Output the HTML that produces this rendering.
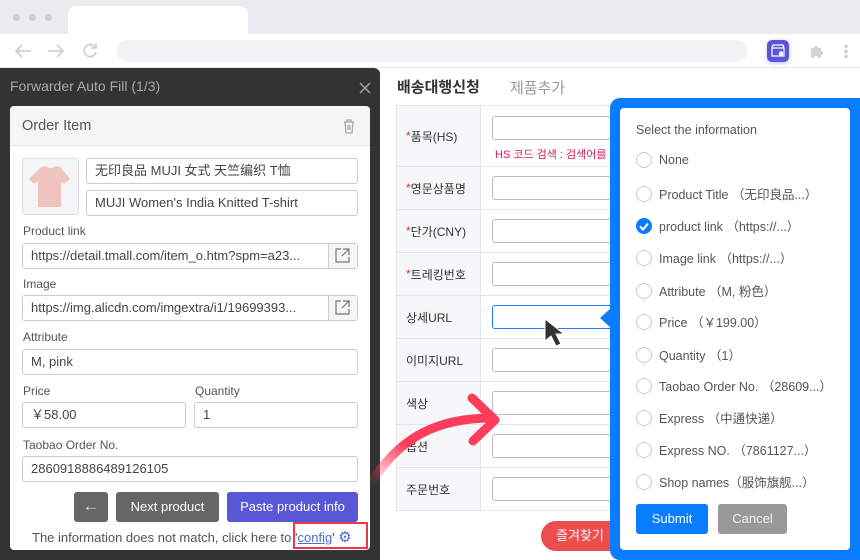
<!DOCTYPE html>
<html><head><meta charset="utf-8"><style>
*{box-sizing:border-box;margin:0;padding:0}
html,body{width:860px;height:560px;overflow:hidden}
body{position:relative;background:#fff;font-family:"Liberation Sans","Noto Sans CJK KR","Noto Sans CJK SC",sans-serif;color:#333}
.abs{position:absolute}
.inp{position:absolute;border:1px solid #ccc;border-radius:3px;background:#fff;font-size:13px;color:#444;padding-left:8px;line-height:23px;white-space:nowrap;overflow:hidden}
.lbl{position:absolute;font-size:12px;color:#555}
.row{position:absolute;left:396px;width:230px;border-bottom:1px solid #e3e6e8}
.row .k{position:absolute;left:0;top:0;bottom:0;width:85px;background:#f5f7f8;border-right:1px solid #e3e6e8;font-size:12px;color:#333;padding-left:10px;display:flex;align-items:center}
.row .k b{color:#e8275a;font-weight:normal}
.row .v{position:absolute;left:96px;width:130px;height:24px;border:1px solid #bbb;border-radius:3px}
.opt{position:absolute;left:636px;font-size:12.5px;color:#555;display:flex;align-items:center;white-space:nowrap}
.opt i{display:inline-block;width:16px;height:16px;border:1px solid #ccc;border-radius:50%;margin-right:7px;background:#fff}
</style></head><body>
<div class="abs" style="left:0;top:0;width:860px;height:34px;background:#e9ebef"></div>
<div class="abs" style="left:13px;top:14px;width:7px;height:7px;border-radius:50%;background:#ccc"></div>
<div class="abs" style="left:29px;top:14px;width:7px;height:7px;border-radius:50%;background:#ccc"></div>
<div class="abs" style="left:45px;top:14px;width:7px;height:7px;border-radius:50%;background:#ccc"></div>
<div class="abs" style="left:68px;top:6px;width:180px;height:28px;background:#fff;border-radius:8px 8px 0 0"></div>
<div class="abs" style="left:0;top:34px;width:860px;height:34px;background:#fff;border-bottom:1px solid #e6e6e6"></div>
<svg class="abs" style="left:14px;top:42px" width="90" height="18" viewBox="0 0 90 18" fill="none" stroke="#ccc" stroke-width="1.6"><path d="M2 9h15M8 3L2 9l6 6"/><path d="M34 9h15M43 3l6 6-6 6"/><path d="M81 5a6 6 0 1 0 1 5"/><path d="M82 1v5h-5"/></svg>
<div class="abs" style="left:117px;top:40px;width:630px;height:22px;background:#f1f2f4;border-radius:11px"></div>
<div class="abs" style="left:767px;top:40px;width:22px;height:22px;background:#5b55d8;border-radius:5px;box-shadow:0 1px 4px rgba(90,80,220,.4)"></div>
<svg class="abs" style="left:771px;top:44px" width="14" height="14" viewBox="0 0 14 14" fill="none" stroke="#fff" stroke-width="1.2"><path d="M1 4h12M2 1h10l1 3v8H1V4z"/><circle cx="10" cy="9.5" r="1.6" fill="#fff"/></svg>
<svg class="abs" style="left:809px;top:43px" width="16" height="16" viewBox="0 0 16 16"><path d="M2 5h3a2 2 0 1 1 4 0h3v3a2 2 0 1 1 0 4v3H9a2 2 0 1 0-4 0H2z" fill="#d4d4d4"/></svg>
<div class="abs" style="left:844px;top:44px;width:4px;height:14px;background:radial-gradient(circle,#ccc 1.6px,transparent 2px) 0 0/4px 5px"></div>

<div class="abs" style="left:0;top:68px;width:380px;height:492px;background:#333;border-radius:0 6px 0 0"></div>
<div class="abs" style="left:10px;top:78px;font-size:14px;color:#aaa">Forwarder Auto Fill (1/3)</div>
<svg class="abs" style="left:359px;top:82px" width="12" height="12" viewBox="0 0 12 12" stroke="#aaa" stroke-width="1.3"><path d="M1 1l10 10M11 1L1 11"/></svg>
<div class="abs" style="left:10px;top:106px;width:360px;height:444px;background:#fff;border-radius:4px;overflow:hidden">
  <div style="height:40px;background:#f5f5f5;border-bottom:1px solid #e2e2e2;font-size:14.5px;color:#555;padding:12px 0 0 12px">Order Item</div>
</div>
<svg class="abs" style="left:343px;top:119px" width="12" height="15" viewBox="0 0 12 15" fill="none" stroke="#aaa" stroke-width="1.3"><path d="M1 3h10M4 3V1h4v2M2 3l1 11h6l1-11M5 6v5M7 6v5"/></svg>
<div class="abs" style="left:22px;top:158px;width:57px;height:57px;border:1px solid #ddd;border-radius:3px;background:#f3f5f6"></div>
<svg class="abs" style="left:27px;top:164px" width="46" height="46" viewBox="0 0 46 46"><path d="M14 3l5-1c2 3 7 3 9 0l5 1 10 12-6 5-3-3v26H11V17l-4 3-5-5z" fill="#eec3c0"/></svg>
<div class="inp" style="left:86px;top:158px;width:272px;height:26px;font-family:'Liberation Sans','Noto Sans CJK SC',sans-serif">无印良品 MUJI 女式 天竺编织 T恤</div>
<div class="inp" style="left:86px;top:190px;width:272px;height:26px">MUJI Women's India Knitted T-shirt</div>
<div class="lbl" style="left:23px;top:224px">Product link</div>
<div class="inp" style="left:22px;top:243px;width:336px;height:26px;padding-right:30px">https://detail.tmall.com/item_o.htm?spm=a23...</div>
<div class="abs" style="left:328px;top:244px;width:29px;height:24px;background:#f5f5f5;border-left:1px solid #ccc"></div>
<svg class="abs" style="left:335px;top:248px" width="15" height="15" viewBox="0 0 15 15" fill="none" stroke="#777" stroke-width="1.2"><path d="M6 1H1v13h13V9M8 1h6v6M14 1L7 8"/></svg>
<div class="lbl" style="left:23px;top:277px">Image</div>
<div class="inp" style="left:22px;top:295px;width:336px;height:26px;padding-right:30px">https://img.alicdn.com/imgextra/i1/19699393...</div>
<div class="abs" style="left:328px;top:296px;width:29px;height:24px;background:#f5f5f5;border-left:1px solid #ccc"></div>
<svg class="abs" style="left:335px;top:300px" width="15" height="15" viewBox="0 0 15 15" fill="none" stroke="#777" stroke-width="1.2"><path d="M6 1H1v13h13V9M8 1h6v6M14 1L7 8"/></svg>
<div class="lbl" style="left:23px;top:330px">Attribute</div>
<div class="inp" style="left:22px;top:349px;width:336px;height:26px">M, pink</div>
<div class="lbl" style="left:23px;top:384px">Price</div>
<div class="lbl" style="left:195px;top:384px">Quantity</div>
<div class="inp" style="left:22px;top:402px;width:164px;height:26px">￥58.00</div>
<div class="inp" style="left:194px;top:402px;width:164px;height:26px">1</div>
<div class="lbl" style="left:23px;top:438px">Taobao Order No.</div>
<div class="inp" style="left:22px;top:456px;width:336px;height:26px">2860918886489126105</div>
<div class="abs" style="left:74px;top:492px;width:34px;height:30px;background:#666;border-radius:3px;color:#ddd;font-size:17px;text-align:center;line-height:28px">←</div>
<div class="abs" style="left:116px;top:492px;width:103px;height:30px;background:#666;border-radius:3px;color:#fff;font-size:13px;text-align:center;line-height:30px">Next product</div>
<div class="abs" style="left:227px;top:492px;width:131px;height:30px;background:#5a57d6;border-radius:3px;color:#fff;font-size:13px;text-align:center;line-height:30px">Paste product info</div>
<div class="abs" style="left:32px;top:528px;font-size:13px;color:#555;white-space:nowrap">The information does not match, click here to '<span style="color:#4a6bd6;text-decoration:underline">config</span>' <span style="color:#4a6bd6;font-size:15px">⚙</span></div>
<div class="abs" style="left:293px;top:522px;width:75px;height:27px;border:2px solid #f0334f"></div>

<div class="abs" style="left:397px;top:76px;font-size:15px;font-weight:bold;color:#333">배송대행신청</div>
<div class="abs" style="left:510px;top:77px;font-size:15px;color:#999">제품추가</div>
<div class="abs" style="left:396px;top:105px;width:230px;height:1px;background:#e3e6e8"></div>
<div class="row" style="top:106px;height:61px"><div class="k"><b>*</b>품목(HS)</div><div class="v" style="top:10px"></div><div class="abs" style="left:99px;top:40px;font-size:11px;color:#d6195c;white-space:nowrap">HS 코드 검색 : 검색어를</div></div>
<div class="row" style="top:167px;height:43px"><div class="k"><b>*</b>영문상품명</div><div class="v" style="top:9px"></div></div>
<div class="row" style="top:210px;height:43px"><div class="k"><b>*</b>단가(CNY)</div><div class="v" style="top:9px"></div></div>
<div class="row" style="top:253px;height:43px"><div class="k"><b>*</b>트레킹번호</div><div class="v" style="top:9px"></div></div>
<div class="row" style="top:296px;height:43px"><div class="k">상세URL</div><div class="v" style="top:9px;border-color:#1a7fff"></div></div>
<div class="row" style="top:339px;height:43px"><div class="k">이미지URL</div><div class="v" style="top:9px"></div></div>
<div class="row" style="top:382px;height:43px"><div class="k">색상</div><div class="v" style="top:9px"></div></div>
<div class="row" style="top:425px;height:43px"><div class="k">옵션</div><div class="v" style="top:9px"></div></div>
<div class="row" style="top:468px;height:43px"><div class="k">주문번호</div><div class="v" style="top:9px"></div></div>
<div class="abs" style="left:396px;top:105px;width:1px;height:406px;background:#e3e6e8"></div>
<div class="abs" style="left:541px;top:521px;width:90px;height:30px;background:#ee4d4d;border-radius:15px;color:#fff;font-size:13px;line-height:30px;padding-left:15px">즐겨찾기</div>

<svg class="abs" style="left:360px;top:380px" width="160" height="140" viewBox="0 0 160 140">
<defs><linearGradient id="g" x1="0" y1="1" x2="1" y2="0"><stop offset="0" stop-color="#ff3d5a" stop-opacity="0"/><stop offset="0.45" stop-color="#ff3d5a"/></linearGradient></defs>
<path d="M10 105 C40 55 80 38 132 38" fill="none" stroke="url(#g)" stroke-width="9" stroke-linecap="round"/>
<path d="M112 18L135 40 113 61" fill="none" stroke="#ff3d5a" stroke-width="9" stroke-linecap="round" stroke-linejoin="round"/>
</svg>

<svg class="abs" style="left:543px;top:317px" width="26" height="32" viewBox="0 0 26 32"><path d="M2 2l0 22 6-5 5 10 5-2-5-10 8 0z" fill="#333" stroke="#fff" stroke-width="1"/></svg>

<div class="abs" style="left:610px;top:98px;width:250px;height:462px;background:#0a7cff;border-radius:10px 0 0 10px"></div>
<div class="abs" style="left:600px;top:308px;width:0;height:0;border-top:10px solid transparent;border-bottom:10px solid transparent;border-right:11px solid #0a7cff"></div>
<div class="abs" style="left:620px;top:108px;width:230px;height:442px;background:#fff;border-radius:4px"></div>
<div class="abs" style="left:636px;top:123px;font-size:12.5px;color:#555">Select the information</div>
<div class="opt" style="top:152px"><i></i>None</div>
<div class="opt" style="top:184px"><i></i>Product Title （无印良品...）</div>
<div class="opt" style="top:216px"><i style="background:#0a7cff;border-color:#0a7cff;position:relative"><svg style="position:absolute;left:2px;top:3px" width="10" height="9" viewBox="0 0 10 9"><path d="M1 4.5l3 3 5-6" fill="none" stroke="#fff" stroke-width="2"/></svg></i>product link （https://...）</div>
<div class="opt" style="top:248px"><i></i>Image link （https://...）</div>
<div class="opt" style="top:281px"><i></i>Attribute （M, 粉色）</div>
<div class="opt" style="top:312px"><i></i>Price （￥199.00）</div>
<div class="opt" style="top:345px"><i></i>Quantity （1）</div>
<div class="opt" style="top:376px"><i></i>Taobao Order No. （28609...）</div>
<div class="opt" style="top:408px"><i></i>Express （中通快递）</div>
<div class="opt" style="top:440px"><i></i>Express NO. （7861127...）</div>
<div class="opt" style="top:472px"><i></i>Shop names（服饰旗舰...）</div>
<div class="abs" style="left:636px;top:504px;width:72px;height:30px;background:#0a7cff;border-radius:3px;color:#fff;font-size:13px;text-align:center;line-height:30px">Submit</div>
<div class="abs" style="left:718px;top:504px;width:69px;height:30px;background:#999;border-radius:3px;color:#f0f0f0;font-size:13px;text-align:center;line-height:30px">Cancel</div>
</body></html>
